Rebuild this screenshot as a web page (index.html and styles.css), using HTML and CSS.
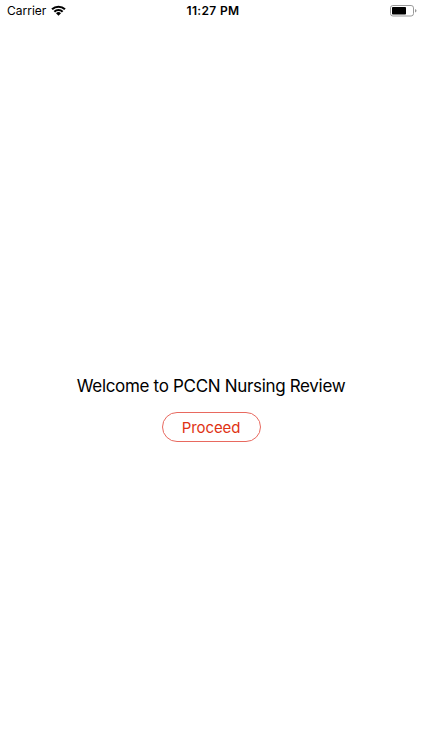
FILE: index.html
```html
<!DOCTYPE html>
<html lang="en">
<head>
  <meta charset="UTF-8" />
  <title>PCCN Nursing Review</title>
  <meta name="viewport" content="width=device-width, initial-scale=1.0" />
  <link rel="stylesheet" href="styles.css">
</head>
<body>
  <!-- Status Bar -->
  <header class="status-bar">
    <div class="carrier">
      <span>Carrier</span>
      <svg class="wifi" viewBox="0 0 15 11" aria-hidden="true">
        <path d="M0.3 3.6 A10.4 10.4 0 0 1 14.7 3.6 L13.2 5.1 A8.2 8.2 0 0 0 1.8 5.1 Z" />
        <path d="M2.6 5.9 A7 7 0 0 1 12.4 5.9 L10.9 7.5 A4.8 4.8 0 0 0 4.1 7.5 Z" />
        <path d="M5 8.3 A3.6 3.6 0 0 1 10 8.3 L7.5 10.8 Z" />
      </svg>
    </div>
    <div class="time">11:27 PM</div>
    <svg class="battery" viewBox="0 0 27 12" aria-hidden="true">
      <rect class="battery-case" x="0.5" y="0.5" width="23" height="10.5" rx="2.4" />
      <rect x="2" y="2" width="14" height="7.5" rx="0.8" />
      <path class="battery-tip" d="M25 4 Q26.5 4.5 26.5 5.8 Q26.5 7 25 7.6 Z" />
    </svg>
  </header>

  <!-- Welcome Screen -->
  <main class="welcome">
    <h1>Welcome to PCCN Nursing Review</h1>
    <button class="btn-proceed">Proceed</button>
  </main>
</body>
</html>
```

FILE: styles.css
```css
* {
  box-sizing: border-box;
}

body {
  font-family: Inter, sans-serif;
  background: #fff;
  color: #000;
  margin: 0;
  height: 750px;
  display: flex;
  flex-direction: column;
  overflow: hidden;
}

.status-bar {
  display: grid;
  grid-template-columns: 1fr auto 1fr;
  align-items: center;
  height: 21px;
  padding: 0 5px 0 7px;
  font-size: 12px;
  line-height: 15px;
}

.carrier {
  display: flex;
  align-items: center;
  gap: 5px;
}

.wifi {
  width: 15px;
  height: 11px;
}

.time {
  font-weight: 600;
  letter-spacing: 0.35px;
  padding-left: 2px;
}

.battery {
  width: 27px;
  height: 12px;
  justify-self: end;
}

.battery-case {
  fill: none;
  stroke: #999;
}

.battery-tip {
  fill: #999;
}

.welcome {
  flex: 1;
  display: flex;
  flex-direction: column;
  align-items: center;
  padding-top: 354px;
}

h1 {
  margin: 0 0 15px;
  font-size: 17px;
  font-weight: 400;
  line-height: 22px;
  letter-spacing: -0.32px;
}

.btn-proceed {
  width: 99px;
  height: 30px;
  padding: 0;
  border: 1px solid #e8695f;
  border-radius: 15px;
  background: #fff;
  color: #e03214;
  font-family: inherit;
  font-size: 15px;
  letter-spacing: -0.1px;
}
```
